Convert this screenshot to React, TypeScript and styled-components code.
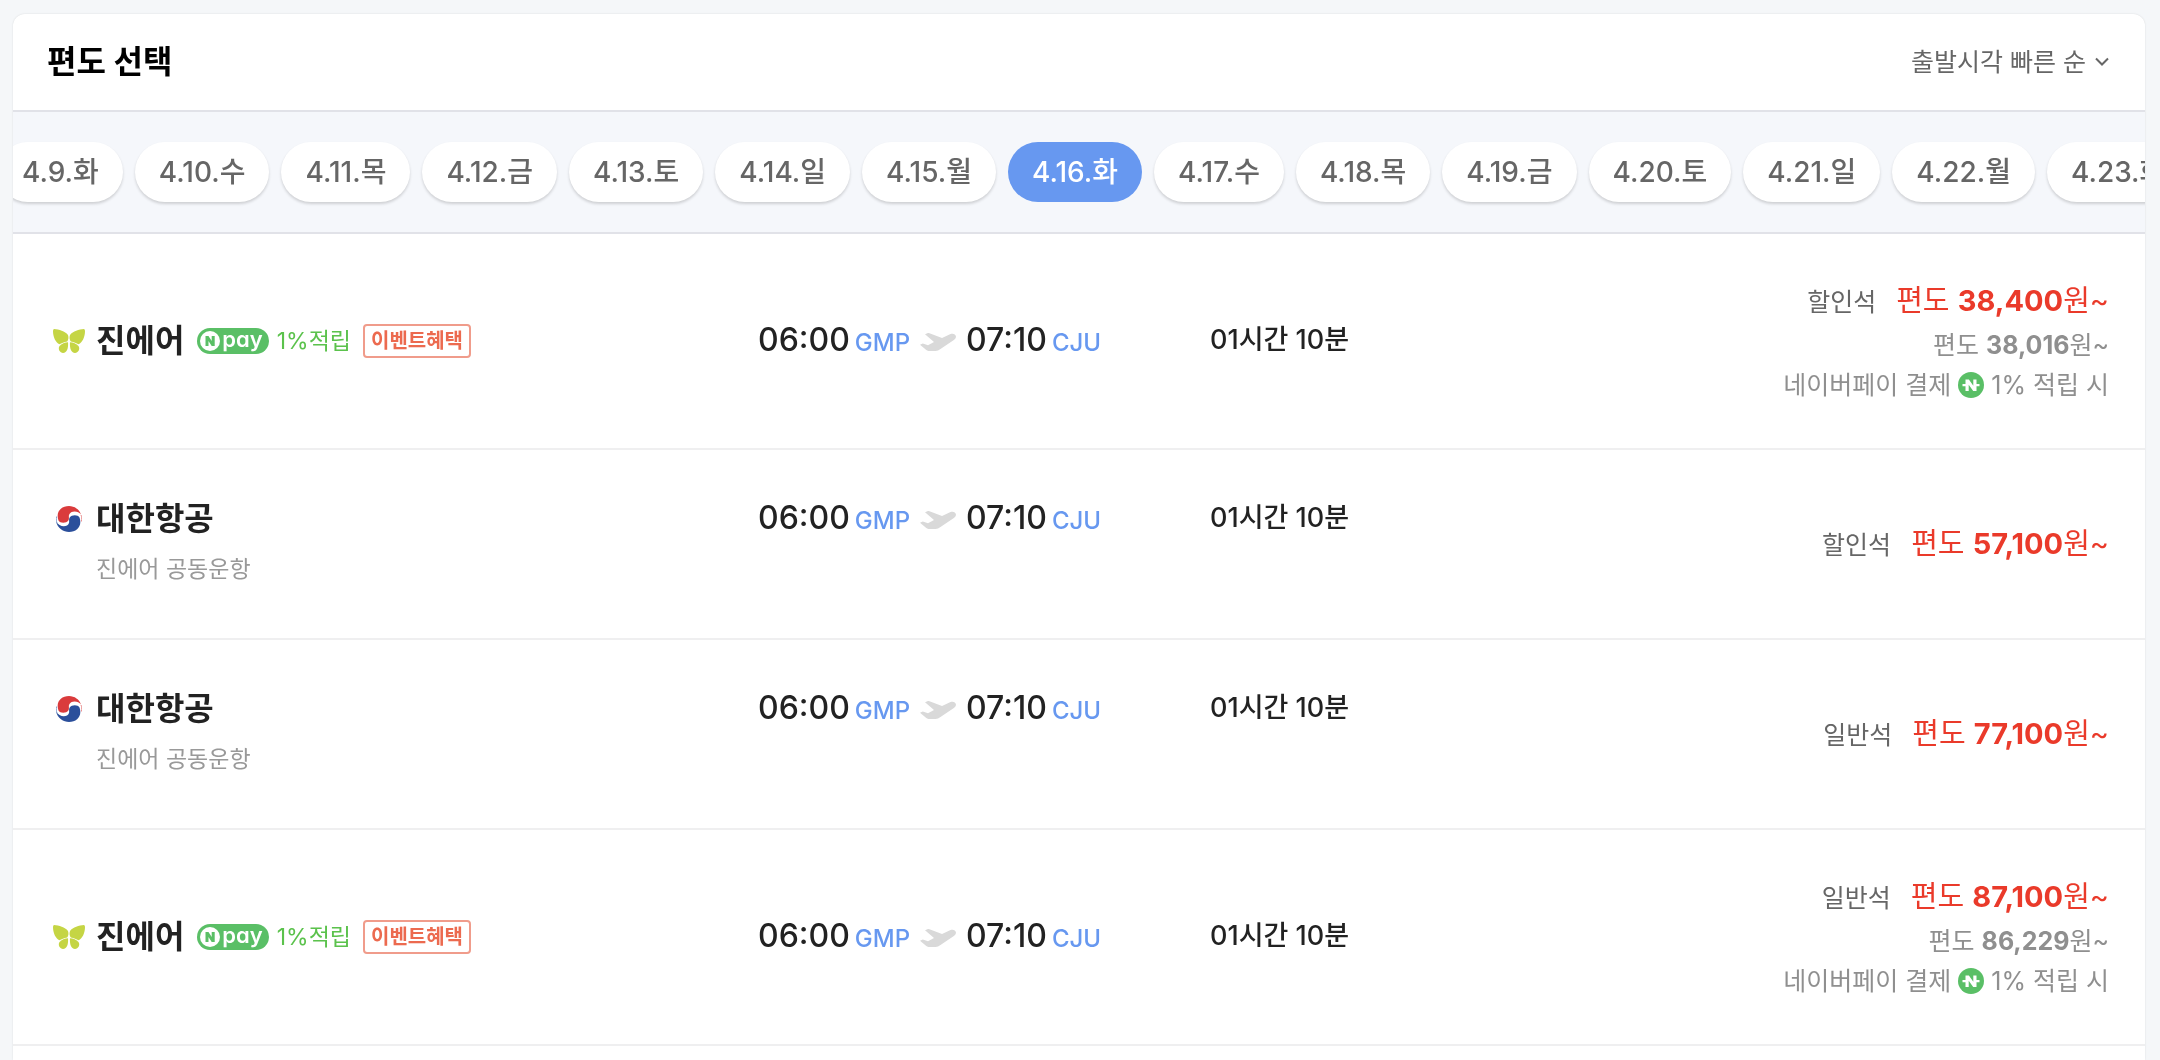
import { useLayoutEffect, useRef, useState } from "react";
import styled, { createGlobalStyle, css } from "styled-components";

const GlobalStyle = createGlobalStyle`
  *, *::before, *::after { box-sizing: border-box; }
  body {
    margin: 0;
    background: #f5f7f9;
    color: #222;
    font-family: Inter, "Noto Sans CJK KR", sans-serif;
    font-size: 25px;
    -webkit-font-smoothing: antialiased;
  }
  button, select { font: inherit; color: inherit; }
  h1, h2, p, ul, ol { margin: 0; padding: 0; font-weight: inherit; }
  ul, ol { list-style: none; }
`;

const Page = styled.div`
  display: flex;
  flex-direction: column;
  height: 100vh;
  padding: 14px 15px 0 13px;
  overflow: hidden;
`;

const Card = styled.main`
  flex: 1;
  min-height: 0;
  overflow: hidden;
  background: #fff;
  border-radius: 12px 12px 0 0;
  box-shadow: 0 0 2px rgba(0, 0, 0, 0.12);
`;

const Header = styled.header`
  display: flex;
  align-items: center;
  justify-content: space-between;
  height: 98px;
  padding: 0 36px 0 34px;
  border-bottom: 2px solid #e1e2e8;
`;

const Title = styled.h1`
  color: #000;
  font-size: 32px;
  font-weight: 700;
  line-height: 40px;
`;

const SortBox = styled.div`
  display: grid;
  align-items: center;
  justify-items: end;
  color: #666;
  & > * { grid-area: 1 / 1; }
`;

const SortSelect = styled.select`
  appearance: none;
  padding: 0 22px 0 0;
  border: 0;
  background: transparent;
  font-size: 25px;
  line-height: 36px;
  cursor: pointer;
`;

const Chevron = styled.svg`
  width: 14px;
  height: 10px;
  pointer-events: none;
`;

const DateStrip = styled.nav`
  background: #f5f7fb;
  border-bottom: 2px solid #e1e2e8;
  overflow-x: auto;
  scrollbar-width: none;
`;

const DateList = styled.ul`
  display: flex;
  gap: 12px;
  width: max-content;
  padding: 30px 0;
`;

const DateChip = styled.button<{ $active: boolean }>`
  height: 60px;
  padding: 0 24px;
  border: 0;
  border-radius: 30px;
  background: #fff;
  color: #666;
  font-size: 28px;
  font-weight: 500;
  line-height: 60px;
  white-space: nowrap;
  box-shadow: 0 2px 3px rgba(0, 0, 0, 0.16);
  cursor: pointer;
  ${(p) =>
    p.$active &&
    css`
      background: #6798f0;
      color: #fff;
      box-shadow: none;
    `}
`;

const FlightRow = styled.li`
  display: flex;
  align-items: center;
  padding: 43px 36px 43px 40px;
  border-bottom: 2px solid #efeff0;
`;

const FlightInfo = styled.div`
  flex: 1;
`;

const FlightLine = styled.div`
  display: grid;
  grid-template-columns: 705fr 452fr 559fr;
  align-items: center;
  height: 52px;
`;

const Airline = styled.div`
  display: flex;
  align-items: center;
`;

const LogoSlot = styled.span`
  display: flex;
  justify-content: center;
  width: 32px;
  margin-right: 11px;
`;

const AirlineName = styled.h2`
  font-size: 32px;
  font-weight: 600;
  line-height: 50px;
`;

const PayBadge = styled.span`
  display: flex;
  align-items: center;
  gap: 2px;
  height: 26px;
  margin-left: 13px;
  padding: 0 6px 0 3px;
  border-radius: 13px;
  background: #5abf66;
  color: #fff;
  font-size: 22px;
  font-weight: 600;
  font-feature-settings: "cv11";
  line-height: 20px;
`;

const PayWord = styled.span`
  padding-bottom: 4px;
`;

const Reward = styled.span`
  margin-left: 8px;
  color: #5bc24c;
  font-size: 23px;
  line-height: 34px;
`;

const EventTag = styled.span`
  height: 34px;
  margin-left: 12px;
  padding: 0 6px;
  border: 2px solid #f09c8b;
  border-radius: 4px;
  color: #ec6a4f;
  font-size: 20px;
  font-weight: 600;
  line-height: 30px;
`;

const Schedule = styled.div`
  display: flex;
  align-items: baseline;
  padding-bottom: 4px;
`;

const Time = styled.time`
  font-size: 32px;
  font-weight: 500;
`;

const Airport = styled.abbr`
  margin-left: 5px;
  color: #6798f0;
  font-size: 24px;
  font-weight: 500;
  text-decoration: none;
`;

const Plane = styled.svg`
  width: 36px;
  height: 18px;
  margin: 0 10px;
`;

const Duration = styled.span`
  padding-bottom: 8px;
  font-size: 27px;
  font-weight: 500;
`;

const Codeshare = styled.p`
  padding: 4px 0 6px 43px;
  color: #999;
  font-size: 23px;
  line-height: 40px;
`;

const Fare = styled.div`
  width: 340px;
  padding-top: 4px;
  text-align: right;
  line-height: 40px;
  color: #8f8f8f;
`;

const MainFare = styled.div`
  display: flex;
  align-items: baseline;
  justify-content: flex-end;
  gap: 20px;
  height: 44px;
`;

const Seat = styled.span`
  color: #666;
`;

const Price = styled.span`
  color: #ea3a2a;
  font-size: 29px;
`;

const Amount = styled.strong`
  font-weight: 700;
`;

const PayNote = styled.p`
  display: flex;
  align-items: center;
  justify-content: flex-end;
  gap: 7px;
`;

function JinAirLogo() {
  return (
    <svg width="32" height="24" viewBox="0 0 32 24" fill="#c5d544" aria-hidden="true">
      <path d="M1 0C6 .5 12 2 15 6c1 3 .3 5-.8 6.500C11 13 8.500 14.500 6.500 15.200 2.500 13.500 0 8 0 2Q0 .3 1 0Z" />
      <path d="M31 0C26 .5 20 2 17 6c-1 3-.3 5 .8 6.500 3.200.5 5.700 2 7.700 2.700C29.500 13.500 32 8 32 2q0-1.700-1-2Z" />
      <path d="M15 13.300c-3 0-6.500 1.500-8.500 3.700C4.500 20 7 24 10 24c4 0 5.500-5 5-10.700Z" />
      <path d="M17 13.300c3 0 6.500 1.500 8.500 3.700 2 3-.5 7-3.500 7-4 0-5.500-5-5-10.700Z" />
    </svg>
  );
}

function KoreanAirLogo() {
  return (
    <svg width="26" height="26" viewBox="0 0 26 26" aria-hidden="true">
      <path
        d="M2.500 14.500C-.5 6 5 0 13 0c5.500 0 10.500 3.500 12 8.500C22 4.500 14.500 4.500 13 9c-.5 2 .5 3.500-.7 5.500-2 3-8.300 3-9.800 0Z"
        fill="#da3b3c"
      />
      <path
        d="M23.500 11.500C26.500 20 21 26 13 26 7.500 26 1.500 22 0 15.500c3.500 6 11.500 6 13 1.500.5-2-.5-3.500.7-5.500 2-3 8.300-3 9.800 0Z"
        fill="#2b4f9b"
      />
      <path d="M.6 10.500C0 13 .3 15.500 1 17" fill="none" stroke="#7f9ccc" strokeWidth="1" />
      <path d="M25.400 15.500c.6-2.500.3-5-.4-6.500" fill="none" stroke="#e88b8b" strokeWidth="1" />
    </svg>
  );
}

function PayMark() {
  return (
    <svg width="20" height="20" viewBox="0 0 20 20" aria-hidden="true">
      <circle cx="10" cy="10" r="10" fill="#fff" />
      <path d="M5.500 15V5h3l3.200 4.900V5h3v10h-3l-3.200-4.900V15Z" fill="#5abf66" />
    </svg>
  );
}

function PayCoin() {
  return (
    <svg width="26" height="26" viewBox="0 0 26 26" role="img" aria-label="N">
      <circle cx="13" cy="13" r="13" fill="#5abf66" />
      <path
        d="M7.500 19v-4.800H4.500v-2.200h3V7.500h3.400l4.400 6.200V7.500h3.200V12h3v2.200h-3V19h-3.300l-4.500-6.300V19Z"
        fill="#fff"
      />
    </svg>
  );
}

type Flight = {
  airline: string;
  codeshare?: string;
  seat: string;
  price: string;
  payPrice?: string;
};

const flights: Flight[] = [
  { airline: "진에어", seat: "할인석", price: "38,400", payPrice: "38,016" },
  { airline: "대한항공", codeshare: "진에어 공동운항", seat: "할인석", price: "57,100" },
  { airline: "대한항공", codeshare: "진에어 공동운항", seat: "일반석", price: "77,100" },
  { airline: "진에어", seat: "일반석", price: "87,100", payPrice: "86,229" },
];

const weekdays = ["화", "수", "목", "금", "토", "일", "월"];
const dates = Array.from({ length: 15 }, (_, i) => `4.${9 + i}.${weekdays[i % 7]}`);

// Extra scroll past the centre, so that more of the coming days shows.
const SCROLL_LEAD = 4;

function FlightItem({ flight }: { flight: Flight }) {
  return (
    <FlightRow>
      <FlightInfo>
        <FlightLine>
          <Airline>
            <LogoSlot>{flight.codeshare ? <KoreanAirLogo /> : <JinAirLogo />}</LogoSlot>
            <AirlineName>{flight.airline}</AirlineName>
            {flight.payPrice && (
              <>
                <PayBadge>
                  <PayMark />
                  <PayWord>pay</PayWord>
                </PayBadge>
                <Reward>1%적립</Reward>
                <EventTag>이벤트혜택</EventTag>
              </>
            )}
          </Airline>
          <Schedule>
            <Time>06:00</Time>
            <Airport>GMP</Airport>
            <Plane viewBox="0 0 36 18" fill="#d9d9d9" aria-hidden="true">
              <path d="M5 1.300 8 0Q8.700-.1 9.500.2L22 5 30 1.300C33 .2 35.500 1 35.900 3.300 36.200 5 35 6.300 33.500 7.300L20.500 16Q18 17.800 15.500 18H8.500Q7 17.700 6 16.800L0 11.800 2.800 10.600 8 12.200 14 9Z" />
            </Plane>
            <Time>07:10</Time>
            <Airport>CJU</Airport>
          </Schedule>
          <Duration>01시간 10분</Duration>
        </FlightLine>
        {flight.codeshare && <Codeshare>{flight.codeshare}</Codeshare>}
      </FlightInfo>
      <Fare>
        <MainFare>
          <Seat>{flight.seat}</Seat>
          <Price>
            편도 <Amount>{flight.price}</Amount>원~
          </Price>
        </MainFare>
        {flight.payPrice && (
          <>
            <p>
              편도 <Amount>{flight.payPrice}</Amount>원~
            </p>
            <PayNote>
              네이버페이 결제 <PayCoin /> 1% 적립 시
            </PayNote>
          </>
        )}
      </Fare>
    </FlightRow>
  );
}

export default function App() {
  const [selected, setSelected] = useState("4.16.화");
  const strip = useRef<HTMLElement>(null);

  // Keep the chosen day in the middle of the strip.
  useLayoutEffect(() => {
    const nav = strip.current;
    const chip = nav?.querySelector<HTMLElement>("[aria-current]");
    if (!nav || !chip) return;
    const navBox = nav.getBoundingClientRect();
    const chipBox = chip.getBoundingClientRect();
    nav.scrollLeft +=
      chipBox.left + chipBox.width / 2 - (navBox.left + navBox.width / 2) + SCROLL_LEAD;
  }, [selected]);

  return (
    <>
      <GlobalStyle />
      <Page>
        <Card>
          <Header>
            <Title>편도 선택</Title>
            <SortBox>
              <SortSelect aria-label="정렬">
                <option>출발시각 빠른 순</option>
                <option>출발시각 늦은 순</option>
              </SortSelect>
              <Chevron viewBox="0 0 14 10" fill="none" stroke="#666" strokeWidth="2" aria-hidden="true">
                <path d="m1 1.500 6 6 6-6" />
              </Chevron>
            </SortBox>
          </Header>
          <DateStrip ref={strip} aria-label="출발일">
            <DateList>
              {dates.map((date) => (
                <li key={date}>
                  <DateChip
                    type="button"
                    $active={date === selected}
                    aria-current={date === selected ? "date" : undefined}
                    onClick={() => setSelected(date)}
                  >
                    {date}
                  </DateChip>
                </li>
              ))}
            </DateList>
          </DateStrip>
          <ul>
            {flights.map((flight) => (
              <FlightItem key={flight.price} flight={flight} />
            ))}
          </ul>
        </Card>
      </Page>
    </>
  );
}
